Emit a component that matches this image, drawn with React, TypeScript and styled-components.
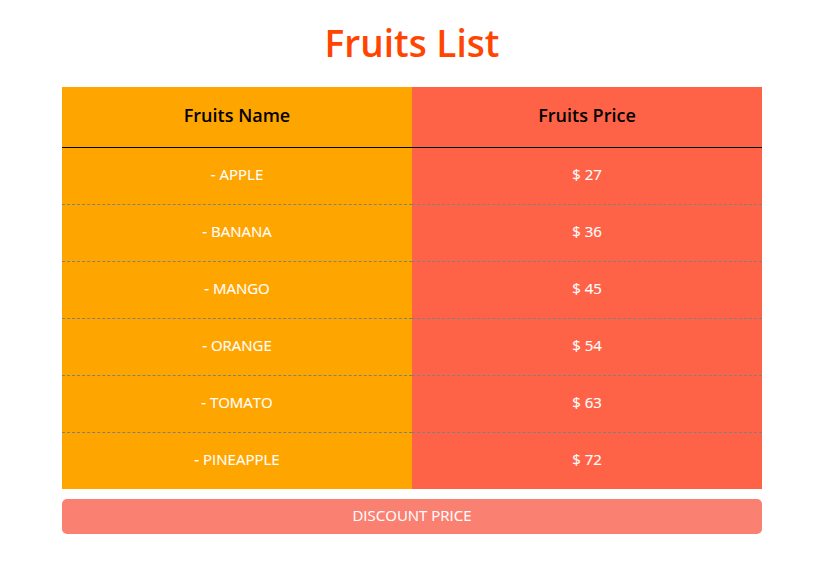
import React from "react";
import styled, { createGlobalStyle } from "styled-components";

const Global = createGlobalStyle`
  html, body { margin: 0; padding: 0; background: #fff; }
  body { font-family: "Open Sans", "Noto Sans", sans-serif; }
`;

const Page = styled.div`
  display: flex;
  flex-direction: column;
  align-items: center;
  padding-right: 4px;
`;

const Title = styled.h1`
  margin: 17px 0 0;
  height: 70px;
  line-height: 52px;
  font-size: 37px;
  font-weight: 600;
  color: #ff4500;
  text-align: center;
`;

const Table = styled.div`
  width: 700px;
  display: grid;
  grid-template-columns: 1fr 1fr;
`;

const Cell = styled.div<{ $col: "name" | "price"; $head?: boolean; $last?: boolean }>`
  box-sizing: border-box;
  height: ${(p) => (p.$head ? "61px" : p.$last ? "56px" : "57px")};
  padding-bottom: ${(p) => (p.$head ? "4px" : "5px")};
  display: flex;
  align-items: center;
  justify-content: center;
  background: ${(p) => (p.$col === "name" ? "#ffa500" : "#ff6347")};
  color: ${(p) => (p.$head ? "#000" : "#fff")};
  font-size: ${(p) => (p.$head ? "18px" : "15px")};
  font-weight: ${(p) => (p.$head ? 600 : 400)};
  -webkit-text-stroke: ${(p) => (p.$head ? "0" : "0.15px #fff")};
  border-bottom: ${(p) =>
    p.$head ? "1px solid #000" : p.$last ? "none" : "1px dashed #808080"};
`;

const Button = styled.button`
  margin-top: 10px;
  width: 700px;
  height: 35px;
  padding: 0 0 4px;
  border: none;
  border-radius: 5px;
  background: #fa8072;
  color: #fff;
  font-family: inherit;
  font-size: 15px;
  font-weight: 400;
  -webkit-text-stroke: 0.1px #fff;
`;

const fruits = [
  { name: "APPLE", price: 27 },
  { name: "BANANA", price: 36 },
  { name: "MANGO", price: 45 },
  { name: "ORANGE", price: 54 },
  { name: "TOMATO", price: 63 },
  { name: "PINEAPPLE", price: 72 },
];

export default function App() {
  return (
    <>
      <Global />
      <Page>
        <Title>Fruits List</Title>
        <Table>
          <Cell $col="name" $head>Fruits Name</Cell>
          <Cell $col="price" $head>Fruits Price</Cell>
          {fruits.map((f, i) => (
            <React.Fragment key={f.name}>
              <Cell $col="name" $last={i === fruits.length - 1}>- {f.name}</Cell>
              <Cell $col="price" $last={i === fruits.length - 1}>$ {f.price}</Cell>
            </React.Fragment>
          ))}
        </Table>
        <Button>DISCOUNT PRICE</Button>
      </Page>
    </>
  );
}
